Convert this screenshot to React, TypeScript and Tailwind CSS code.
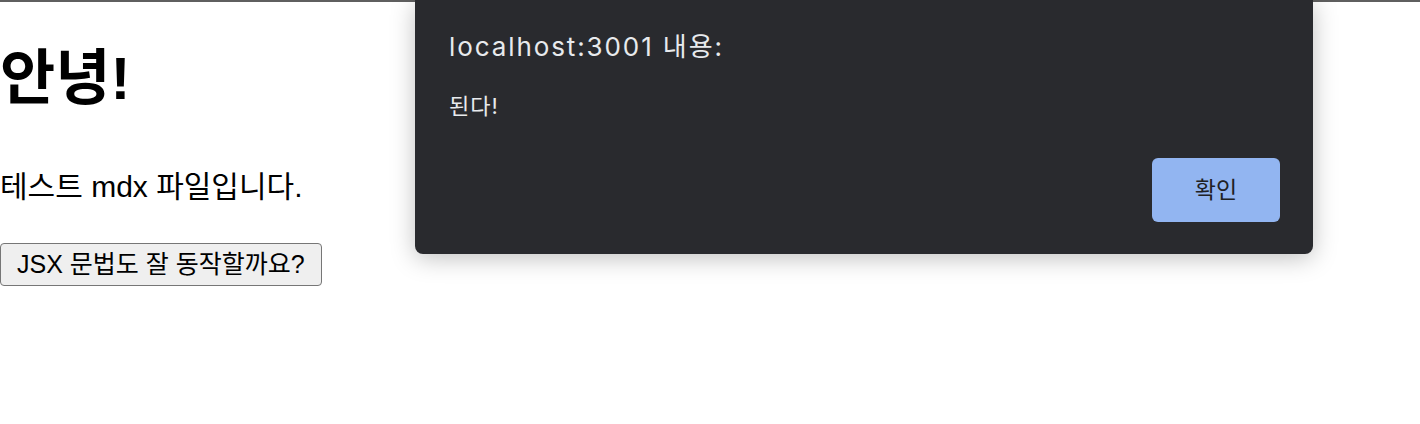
import React from 'react';

const App: React.FC = () => {
  return (
    <div className="relative w-[1420px] h-[424px] bg-white overflow-hidden" style={{ fontFamily: '"Liberation Sans", "Noto Sans CJK KR", sans-serif' }}>
      <div className="h-[2px] bg-[#5f5f5f]" />

      {/* 페이지 본문 */}
      <div className="flex flex-col items-start">
        <h1 className="mt-[41px] text-[60px] leading-[72px] font-bold text-black">안녕!</h1>
        <p className="mt-[54px] text-[30px] leading-[36px] text-black">테스트 mdx 파일입니다.</p>
        <button className="mt-[38px] h-[43px] px-[16px] text-[25px] leading-none text-black bg-[#efefef] border border-[#767676] rounded-[4px]">
          JSX 문법도 잘 동작할까요?
        </button>
      </div>

      {/* alert 대화상자 */}
      <div
        className="absolute left-[415px] top-0 w-[898px] h-[254px] bg-[#292a2e] rounded-b-[8px] shadow-[0_4px_24px_rgba(0,0,0,0.25)] flex flex-col pl-[34px] pr-[33px]"
        style={{ fontFamily: 'Inter, "Noto Sans CJK KR", sans-serif' }}
      >
        <div className="mt-[32px] text-[26px] leading-[30px] tracking-[1.9px] text-[#e8eaed]">localhost:3001 내용:</div>
        <div className="mt-[30px] text-[22px] leading-[28px] tracking-[1px] text-[#e8eaed]">된다!</div>
        <div className="mt-auto mb-[32px] flex justify-end">
          <button className="w-[128px] h-[64px] rounded-[6px] bg-[#92b5f1] text-[23px] text-[#202124]">확인</button>
        </div>
      </div>
    </div>
  );
};

export default App;
